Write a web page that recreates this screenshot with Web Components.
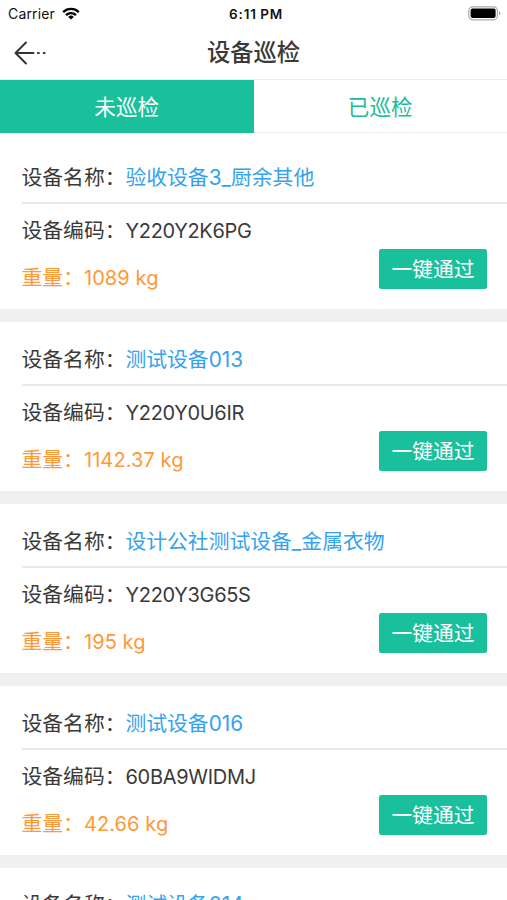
<!DOCTYPE html>
<html lang="zh-CN">
<head>
<meta charset="utf-8">
<title>设备巡检</title>
<style>
    html, body {
        margin: 0;
        height: 900px;
        overflow: hidden;
        background: #fff;
    }

    body {
        font-family: Inter, "Noto Sans CJK SC", sans-serif;
        color: #3a3a3a;
    }
</style>
</head>
<body>
<inspect-app></inspect-app>

<script>
// Build a <template> from a html string
const html = (str) => {
    const $template = document.createElement("template");
    $template.innerHTML = str;
    return $template;
};

const $statusBar = html(/*html */ `
    <style>
        :host {
            display: grid;
            grid-template-columns: 1fr auto 1fr;
            align-items: center;
            height: 27px;
            padding: 0 6px 0 8px;
            box-sizing: border-box;
            color: #111;
            font-size: 14px;
        }

        .left { display: flex; align-items: center; gap: 7px; letter-spacing: 0.15px; }
        .time { margin-left: 3px; font-size: 13.5px; font-weight: 600; letter-spacing: 0.9px; word-spacing: -1px; }
        .battery { justify-self: end; }
        svg { display: block; }
    </style>
    <div class="left">
        <span>Carrier</span>
        <svg width="18" height="13" viewBox="0 0 18 13" fill="none" stroke="#000" stroke-width="2.3">
            <path d="M1.2 5.1a11.2 11.2 0 0 1 15.6 0"/>
            <path d="M4 8.1a7.2 7.2 0 0 1 10 0"/>
            <path d="M9 12.6L6.2 9.9a4 4 0 0 1 5.6 0z" fill="#000" stroke="none"/>
        </svg>
    </div>
    <span class="time"><slot></slot></span>
    <svg class="battery" width="33" height="15" viewBox="0 0 33 15">
        <rect x="0.8" y="0.8" width="28.6" height="13" rx="3.8" fill="#fff" stroke="#aaa" stroke-width="1.2"/>
        <rect x="2.6" y="2.6" width="25" height="9.4" rx="2" fill="#000"/>
        <path d="M31 5.2v4.2a2.4 2.4 0 0 0 0-4.2z" fill="#999"/>
    </svg>
`);

class StatusBar extends HTMLElement {
    constructor() {
        super();
        this.attachShadow({mode:'open'});
        this.shadowRoot.appendChild($statusBar.content.cloneNode(true));
    }
}

const $navBar = html(/*html */ `
    <style>
        :host {
            display: grid;
            grid-template-columns: 1fr auto 1fr;
            align-items: center;
            height: 53px;
            padding: 0 14px;
            box-sizing: border-box;
            border-bottom: 1px solid #e6eceb;
        }

        h1 { margin: 0; font-size: 23.3px; font-weight: 500; line-height: 50px; }
        svg { display: block; margin-bottom: 1px; }
    </style>
    <svg width="33" height="24" viewBox="0 0 33 24" fill="none" stroke="#333" stroke-width="2" stroke-linecap="round" stroke-linejoin="round">
        <path d="M12 1.5L1.5 12L12 22.5M1.5 12H19.5"/>
        <path d="M23.2 12h2.4M29 12h2.4" stroke-width="2" stroke-linecap="butt"/>
    </svg>
    <h1><slot></slot></h1>
`);

class NavBar extends HTMLElement {
    constructor() {
        super();
        this.attachShadow({mode:'open'});
        this.shadowRoot.appendChild($navBar.content.cloneNode(true));
    }
}

const $tabItem = html(/*html */ `
    <style>
        :host {
            flex: 1;
            display: flex;
            align-items: center;
            justify-content: center;
            box-sizing: border-box;
            padding-bottom: 1px;
            border-bottom: 1px solid #eee;
            color: #1abc9c;
            font-size: 21.6px;
        }

        :host([active]) {
            background: #1abf9c;
            border-color: #1abf9c;
            color: #fff;
        }
    </style>
    <slot></slot>
`);

class TabItem extends HTMLElement {
    constructor() {
        super();
        this.attachShadow({mode:'open'});
        this.shadowRoot.appendChild($tabItem.content.cloneNode(true));
    }
}

const $deviceCard = html(/*html */ `
    <style>
        :host {
            display: block;
            height: 181.9px;
            box-sizing: border-box;
            padding-left: 21.5px;
            border-bottom: 13.4px solid #f0f0f0;
            font-size: 20.8px;
            line-height: 30px;
        }

        .row { display: flex; align-items: baseline; white-space: nowrap; }
        .name { height: 63.7px; padding-top: 22.6px; box-sizing: border-box; border-bottom: 2px solid #e8e8e8; }
        .name ::slotted(*) { color: #35a2ee; }
        .bottom { display: flex; justify-content: space-between; padding: 12px 20px 0 0; }
        .code { height: 47px; }
        .code ::slotted(*) { font-size: 20px; letter-spacing: -0.3px; }
        .weight { color: #ff9838; }
        .weight ::slotted(*) { font-size: 20px; letter-spacing: 0.1px; }

        button {
            width: 108px;
            height: 40px;
            margin-top: 33px;
            padding: 2px 0 0;
            border: 0;
            border-radius: 2.5px;
            background: #1abf9c;
            color: #fff;
            font: inherit;
            line-height: 38px;
        }
    </style>
    <div class="row name"><span>设备名称：</span><slot name="name"></slot></div>
    <div class="bottom">
        <div>
            <div class="row code"><span>设备编码：</span><slot name="code"></slot></div>
            <div class="row weight"><span>重量：</span><slot name="weight"></slot></div>
        </div>
        <button>一键通过</button>
    </div>
`);

class DeviceCard extends HTMLElement {
    constructor() {
        super();
        this.attachShadow({mode:'open'});
        this.shadowRoot.appendChild($deviceCard.content.cloneNode(true));
    }
}

const $app = html(/*html */ `
    <style>
        :host { display: block; height: 900px; overflow: hidden; }
        .tabs { display: flex; height: 53px; }
        .list { padding-top: 7.3px; }
    </style>
    <status-bar>6:11 PM</status-bar>
    <nav-bar>设备巡检</nav-bar>
    <div class="tabs">
        <tab-item active>未巡检</tab-item>
        <tab-item>已巡检</tab-item>
    </div>
    <div class="list"></div>
`);

const devices = [
    { name: "验收设备3_厨余其他", code: "Y220Y2K6PG", weight: "1089 kg" },
    { name: "测试设备013", code: "Y220Y0U6IR", weight: "1142.37 kg" },
    { name: "设计公社测试设备_金属衣物", code: "Y220Y3G65S", weight: "195 kg" },
    { name: "测试设备016", code: "60BA9WIDMJ", weight: "42.66 kg" },
    // only the top of this one fits on the screen
    { name: "测试设备014" },
];

class InspectApp extends HTMLElement {
    constructor() {
        super();
        this.attachShadow({mode:'open'});
        this.shadowRoot.appendChild($app.content.cloneNode(true));

        const $list = this.shadowRoot.querySelector(".list");
        devices.forEach((device) => {
            const $card = document.createElement("device-card");
            Object.keys(device).forEach((key) => {
                const $span = document.createElement("span");
                $span.slot = key;
                $span.textContent = device[key];
                $card.appendChild($span);
            });
            $list.appendChild($card);
        });
    }
}

window.customElements.define('status-bar', StatusBar);
window.customElements.define('nav-bar', NavBar);
window.customElements.define('tab-item', TabItem);
window.customElements.define('device-card', DeviceCard);
window.customElements.define('inspect-app', InspectApp);
</script>
</body>
</html>
